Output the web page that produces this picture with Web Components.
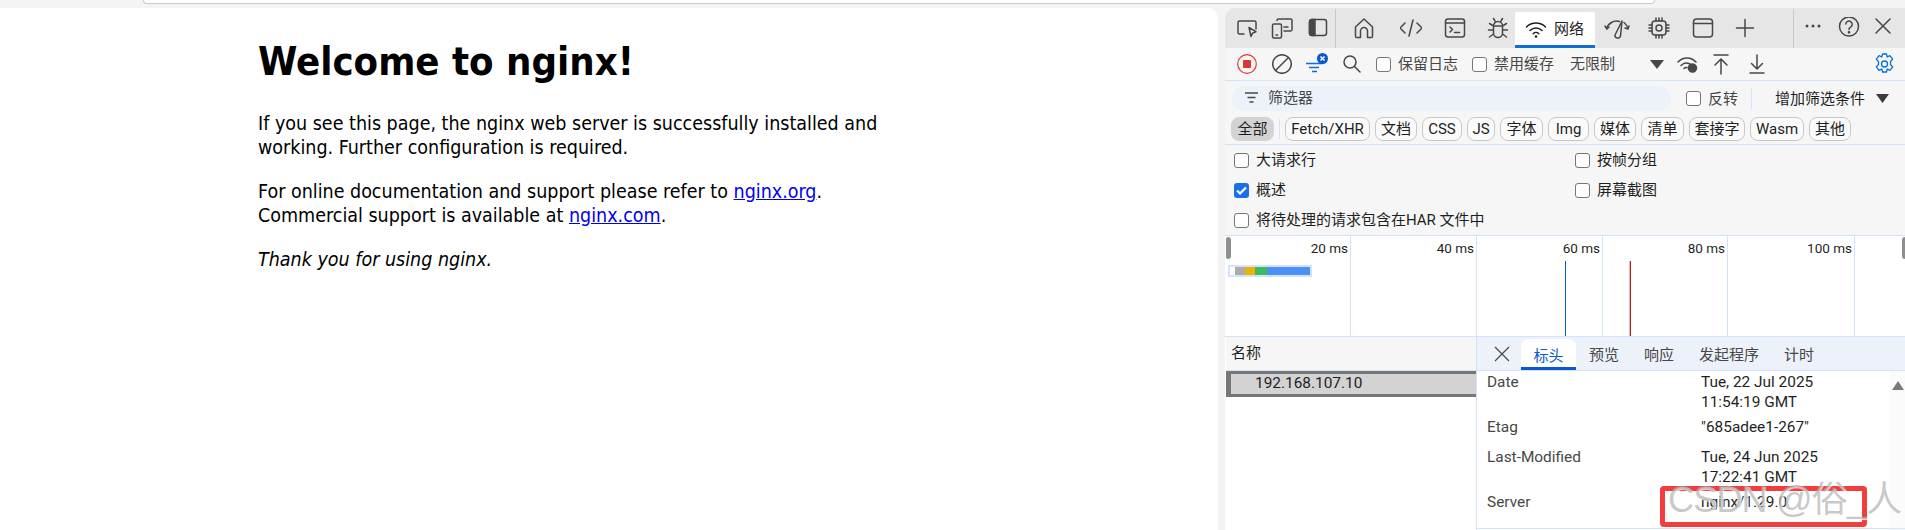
<!DOCTYPE html>
<html lang="zh">
<head>
<meta charset="utf-8">
<title>nginx devtools</title>
<style>
    html, body { margin: 0; height: 530px; overflow: hidden; background: #f3f3f3; }
</style>
</head>
<body>
<browser-frame></browser-frame>
<script>
// shared look of the devtools icons
const svgAttrs = 'fill="none" stroke="#474747" stroke-width="1.5" stroke-linecap="round" stroke-linejoin="round"';

customElements.define("browser-frame", class extends HTMLElement {
    connectedCallback() {
        this.attachShadow({mode: 'open'});
        this.shadowRoot.innerHTML = `
            <style>
                :host { display: block; width: 1905px; height: 530px; }
                #strip { height: 8px; background: #f4f4f4; }
                #address {
                    box-sizing: border-box;
                    width: 1512px;
                    height: 4px;
                    margin-left: 143px;
                    background: #fff;
                    border: 1px solid #cbcbcb;
                    border-top: none;
                    border-radius: 0 0 12px 12px;
                }
                #main { display: flex; gap: 7px; height: 522px; }
            </style>
            <div id="strip"><div id="address"></div></div>
            <div id="main">
                <nginx-page></nginx-page>
                <dev-tools></dev-tools>
            </div>
        `;
    }
});

customElements.define("nginx-page", class extends HTMLElement {
    connectedCallback() {
        this.attachShadow({mode: 'open'});
        this.shadowRoot.innerHTML = `
            <style>
                :host {
                    display: block;
                    box-sizing: border-box;
                    width: 1218px;
                    padding: 30px 0 0 258px;
                    background: #fff;
                    border-radius: 0 10px 0 0;
                    color: #000;
                    font-family: "DejaVu Sans Condensed", "DejaVu Sans", sans-serif;
                    font-size: 19.500px;
                    line-height: 24px;
                }
                h1 { margin: 0 0 27px; font-size: 39.700px; line-height: 47px; font-weight: bold; }
                p { margin: 0 0 20px; width: 640px; }
                a { color: #00e; }
            </style>
            <h1>Welcome to nginx!</h1>
            <p>If you see this page, the nginx web server is successfully installed and working. Further configuration is required.</p>
            <p>For online documentation and support please refer to <a href="#">nginx.org</a>.<br>Commercial support is available at <a href="#">nginx.com</a>.</p>
            <p><em>Thank you for using nginx.</em></p>
        `;
    }
});

customElements.define("dev-tools", class extends HTMLElement {
    connectedCallback() {
        this.attachShadow({mode: 'open'});
        this.shadowRoot.innerHTML = `
            <style>
                :host {
                    display: block;
                    width: 680px;
                    height: 522px;
                    overflow: hidden;
                    background: #f6f6f6;
                    border-radius: 10px 0 0 0;
                    color: #1f1f1f;
                    font-family: Roboto, "Noto Sans CJK SC", sans-serif;
                    font-size: 15px;
                    line-height: 20px;
                }
            </style>
            <dt-tabbar></dt-tabbar>
            <dt-toolbar></dt-toolbar>
            <dt-filter></dt-filter>
            <dt-chips></dt-chips>
            <dt-options></dt-options>
            <dt-overview></dt-overview>
            <dt-requests></dt-requests>
        `;
    }
});

customElements.define("dt-tabbar", class extends HTMLElement {
    connectedCallback() {
        this.attachShadow({mode: 'open'});
        this.shadowRoot.innerHTML = `
            <style>
                :host { display: flex; align-items: center; height: 40px; background: #e6e6e6; }
                svg { display: block; flex: none; width: 22px; height: 22px; }
                .sep { flex: none; width: 1px; height: 39px; background: #c8c8c8; }
                #net {
                    flex: none;
                    display: flex;
                    align-items: center;
                    box-sizing: border-box;
                    width: 80px;
                    height: 36px;
                    margin: 4px 0 0 6px;
                    padding-left: 10px;
                    gap: 7px;
                    background: #fff;
                    border-bottom: 3px solid #0b6fd6;
                    border-radius: 2px 2px 0 0;
                    font-size: 15px;
                    color: #1f1f1f;
                }
            </style>
            <svg style="margin-left:11px" viewBox="0 0 22 22" ${svgAttrs}><path d="M8 17H3.500A1.500 1.500 0 0 1 2 15.500v-10A1.500 1.500 0 0 1 3.500 4h15A1.500 1.500 0 0 1 20 5.500V12"/><path d="M13 10.500l2 9 1.600-3.400 3.400-1.400z"/></svg>
            <svg style="margin-left:13px" viewBox="0 0 22 22" ${svgAttrs}><rect x="1.500" y="7" width="9" height="14" rx="1.500"/><path d="M6 3.500A1.500 1.500 0 0 1 7.500 2h12A1.500 1.500 0 0 1 21 3.500v9a1.500 1.500 0 0 1-1.500 1.500H13M13 10h4M5 18h1.500"/></svg>
            <svg style="margin-left:14px" viewBox="0 0 22 22" ${svgAttrs}><rect x="2.500" y="2.500" width="17" height="16" rx="2.500"/><path d="M2.500 5a2.500 2.500 0 0 1 2.500-2.500h3v16H5A2.500 2.500 0 0 1 2.500 16z" fill="#474747"/></svg>
            <div class="sep" style="margin-left:6px"></div>
            <svg style="margin-left:17px" viewBox="0 0 22 22" ${svgAttrs}><path d="M2.500 10L11 2l8.500 8v9.500a1 1 0 0 1-1 1h-4V14a3.500 3.500 0 0 0-7 0v6.500h-4a1 1 0 0 1-1-1z"/></svg>
            <svg style="margin-left:25px" viewBox="0 0 22 22" ${svgAttrs}><path d="M5 6l-5 5 5 5M17 6l5 5-5 5M13 3L9 19"/></svg>
            <svg style="margin-left:22px" viewBox="0 0 22 22" ${svgAttrs}><rect x="1.500" y="2" width="19" height="18" rx="2.500"/><path d="M1.500 6h19M6 10l2.500 2.500L6 15M10.500 15.500h5"/></svg>
            <svg style="margin-left:21px" viewBox="0 0 22 22" ${svgAttrs}><path d="M6.500 9a4.500 4.500 0 0 1 9 0v7a4.500 4.500 0 0 1-9 0zM6.500 9h9M8 4L6.500 1.500M14 4l1.500-2.500M6.500 9L2.500 6.500M15.500 9l4-2.500M6.500 13H1.500M15.500 13h5M6.500 17l-4 3M15.500 17l4 3"/></svg>
            <div id="net">
                <svg viewBox="0 0 22 22" ${svgAttrs}><path d="M1.500 9a13.500 13.500 0 0 1 19 0M5 12.500a8.500 8.500 0 0 1 12 0M8.200 15.700a4 4 0 0 1 5.600 0" stroke="#1f1f1f"/><circle cx="11" cy="18.500" r="1.300" fill="#1f1f1f" stroke="none"/></svg>
                <span>网络</span>
            </div>
            <svg style="margin-left:9px;width:26px" viewBox="0 0 26 22" ${svgAttrs} stroke-width="1.300"><path d="M2.500 12a10.500 10.500 0 0 1 13-7.500M20 5.500a10.500 10.500 0 0 1 4 6.500M1 9l2 3 2-2M21 11l3 1 1-3"/><path d="M11 18l7-14-1.500 15a2.800 2.800 0 0 1-5.500-1z"/></svg>
            <svg style="margin-left:18px" viewBox="0 0 22 22" ${svgAttrs}><rect x="4" y="4" width="14" height="14" rx="3"/><circle cx="11" cy="11" r="3"/><path d="M8 4V1M11 4V1M14 4V1M8 21v-3M11 21v-3M14 21v-3M4 8H1M4 11H1M4 14H1M21 8h-3M21 11h-3M21 14h-3"/></svg>
            <svg style="margin-left:22px" viewBox="0 0 22 22" ${svgAttrs}><rect x="1.500" y="2" width="19" height="18" rx="3"/><path d="M1.500 6.500h19"/></svg>
            <svg style="margin-left:21px;width:20px" viewBox="0 0 20 22" ${svgAttrs}><path d="M10 2.500v17M1.500 11h17"/></svg>
            <div class="sep" style="margin-left:38px"></div>
            <svg style="margin-left:11px;width:16px" viewBox="0 0 16 22" fill="#474747"><circle cx="2" cy="9" r="1.500"/><circle cx="8" cy="9" r="1.500"/><circle cx="14" cy="9" r="1.500"/></svg>
            <svg style="margin-left:17px" viewBox="0 0 22 22" ${svgAttrs} stroke-width="1.200"><circle cx="11" cy="9.500" r="9.500"/><path d="M7.800 7a3.200 3.200 0 1 1 4.700 3.100c-1 .6-1.500 1.200-1.500 2.400"/><circle cx="11" cy="15.300" r=".6"/></svg>
            <svg style="margin-left:14px;width:18px" viewBox="0 0 18 22" ${svgAttrs}><path d="M2 2l14 14M16 2L2 16"/></svg>
        `;
    }
});

// checkbox with label, used in the toolbar and the options block
customElements.define("dt-check", class extends HTMLElement {
    connectedCallback() {
        const on = this.hasAttribute("checked");
        this.attachShadow({mode: 'open'});
        this.shadowRoot.innerHTML = `
            <style>
                :host { display: inline-flex; align-items: center; gap: 7px; font-size: 15px; }
                :host([dim]) { color: #474747; }
                #box {
                    flex: none;
                    box-sizing: border-box;
                    width: 15px;
                    height: 15px;
                    border: 1px solid #747775;
                    border-radius: 3px;
                    background: #fff;
                }
                #box.on { border: none; background: #1a6fe8; }
                svg { display: block; }
            </style>
            <div id="box" class="${on ? 'on' : ''}">${on ? '<svg width="15" height="15" viewBox="0 0 15 15" fill="none" stroke="#fff" stroke-width="2.200"><path d="M3 7.500l3 3 6-6"/></svg>' : ''}</div>
            <span><slot></slot></span>
        `;
    }
});

customElements.define("dt-toolbar", class extends HTMLElement {
    connectedCallback() {
        this.attachShadow({mode: 'open'});
        this.shadowRoot.innerHTML = `
            <style>
                :host {
                    display: flex;
                    align-items: center;
                    box-sizing: border-box;
                    height: 33px;
                    border-bottom: 1px solid #d3e3fd;
                    color: #474747;
                }
                svg { display: block; flex: none; }
                span { flex: none; font-size: 15px; }
            </style>
            <svg style="margin-left:12px" width="20" height="20" viewBox="0 0 20 20"><circle cx="10" cy="10" r="9.300" fill="none" stroke="#dc362e" stroke-width="1.200"/><rect x="6" y="6" width="8" height="8" rx="1" fill="#dc362e"/></svg>
            <svg style="margin-left:15px" width="20" height="20" viewBox="0 0 20 20" ${svgAttrs} stroke-width="1.200"><circle cx="10" cy="10" r="9.300"/><path d="M3.500 16.500l13-13"/></svg>
            <svg style="margin-left:14px" width="23" height="22" viewBox="0 0 23 22" fill="none" stroke="#0b6fd6" stroke-width="1.300"><path d="M0 10.500h17M3 14.500h10M6 18.500h5"/><circle cx="16.500" cy="5.500" r="5.500" fill="#0b57d0" stroke="none"/><path d="M14.500 3.500l4 4M18.500 3.500l-4 4" stroke="#fff" stroke-width="1.500"/></svg>
            <svg style="margin-left:14px" width="18" height="18" viewBox="0 0 18 18" ${svgAttrs} stroke-width="1.300"><circle cx="7" cy="7" r="6"/><path d="M11.500 11.500L17 17"/></svg>
            <dt-check style="margin-left:15px">保留日志</dt-check>
            <dt-check style="margin-left:14px">禁用缓存</dt-check>
            <span style="margin-left:16px">无限制</span>
            <svg style="margin-left:35px" width="14" height="9" viewBox="0 0 14 9"><path d="M0 0h14L7 9z" fill="#474747"/></svg>
            <svg style="margin-left:13px" width="21" height="18" viewBox="0 0 21 18" ${svgAttrs} stroke-width="1.300"><path d="M1 7a12 12 0 0 1 18 0M4 10.500a7.500 7.500 0 0 1 9-1.500M7 13.500a3 3 0 0 1 3-1"/><circle cx="15.500" cy="13" r="3.500" stroke-width="2.500" stroke-dasharray="2 1"/><circle cx="15.500" cy="13" r="2" fill="#474747"/></svg>
            <svg style="margin-left:14px" width="18" height="21" viewBox="0 0 18 21" ${svgAttrs} stroke-width="1.300"><path d="M2 1h14M9 20V5M3 11l6-6 6 6"/></svg>
            <svg style="margin-left:19px" width="16" height="21" viewBox="0 0 16 21" ${svgAttrs} stroke-width="1.300"><path d="M1 19h14M8 1v14M2.500 9.500L8 15l5.500-5.500"/></svg>
            <svg style="margin-left:109px" width="21" height="22" viewBox="0 0 21 22" fill="none" stroke="#0b6fd6" stroke-width="1.300" stroke-linejoin="round"><path d="M8.500 1h4l.7 3 2.700-1.400 2.800 3.500-2.200 2.400v3l2.200 2.400-2.800 3.500-2.700-1.400-.7 3h-4l-.7-3-2.700 1.400-2.800-3.500 2.200-2.400v-3L2.300 6.100l2.800-3.500 2.700 1.400z"/><circle cx="10.500" cy="11" r="3"/></svg>
        `;
    }
});

customElements.define("dt-filter", class extends HTMLElement {
    connectedCallback() {
        this.attachShadow({mode: 'open'});
        this.shadowRoot.innerHTML = `
            <style>
                :host { display: flex; align-items: center; height: 35px; }
                #input {
                    flex: none;
                    display: flex;
                    align-items: center;
                    gap: 10px;
                    box-sizing: border-box;
                    width: 439px;
                    height: 25px;
                    margin-left: 7px;
                    padding: 0 0 2px 13px;
                    background: #edf2fa;
                    border-radius: 12.500px;
                    color: #474747;
                    font-size: 15px;
                }
                svg { display: block; flex: none; }
                .sep { flex: none; width: 1px; height: 21px; margin: 0 23px 0 13px; background: #d3e3fd; }
                #more { flex: none; font-size: 15px; }
            </style>
            <div id="input">
                <svg width="13" height="11" viewBox="0 0 13 11" fill="none" stroke="#474747" stroke-width="1.300"><path d="M0 1h13M2.500 5.500h8M4.500 10h4"/></svg>
                <span>筛选器</span>
            </div>
            <dt-check dim style="margin-left:15px">反转</dt-check>
            <div class="sep"></div>
            <span id="more">增加筛选条件</span>
            <svg style="margin-left:11px" width="13" height="9" viewBox="0 0 13 9"><path d="M0 0h13L6.500 9z" fill="#3c3c3c"/></svg>
        `;
    }
});

customElements.define("dt-chip", class extends HTMLElement {
    connectedCallback() {
        this.attachShadow({mode: 'open'});
        this.shadowRoot.innerHTML = `
            <style>
                :host {
                    display: flex;
                    align-items: center;
                    justify-content: center;
                    box-sizing: border-box;
                    height: 24px;
                    border: 1px solid #c7c7c7;
                    border-radius: 8px;
                    background: #fafafa;
                    font-size: 15px;
                }
                :host([active]) { background: #d3d3d3; border-color: #d3d3d3; }
            </style>
            <slot></slot>
        `;
    }
});

customElements.define("dt-chips", class extends HTMLElement {
    connectedCallback() {
        this.attachShadow({mode: 'open'});
        this.shadowRoot.innerHTML = `
            <style>
                :host {
                    display: flex;
                    align-items: center;
                    gap: 5px;
                    box-sizing: border-box;
                    height: 29px;
                    padding: 0 0 2px 6px;
                    border-bottom: 1px solid #d3e3fd;
                }
                .sep { width: 1px; height: 20px; background: #d3e3fd; }
            </style>
            <dt-chip active style="width:43px">全部</dt-chip>
            <div class="sep"></div>
            <dt-chip style="width:85px">Fetch/XHR</dt-chip>
            <dt-chip style="width:42px">文档</dt-chip>
            <dt-chip style="width:40px">CSS</dt-chip>
            <dt-chip style="width:28px">JS</dt-chip>
            <dt-chip style="width:43px">字体</dt-chip>
            <dt-chip style="width:41px">Img</dt-chip>
            <dt-chip style="width:42px">媒体</dt-chip>
            <dt-chip style="width:43px">清单</dt-chip>
            <dt-chip style="width:56px">套接字</dt-chip>
            <dt-chip style="width:54px">Wasm</dt-chip>
            <dt-chip style="width:42px">其他</dt-chip>
        `;
    }
});

customElements.define("dt-options", class extends HTMLElement {
    connectedCallback() {
        this.attachShadow({mode: 'open'});
        this.shadowRoot.innerHTML = `
            <style>
                :host {
                    display: grid;
                    grid-template-columns: 341px 1fr;
                    grid-auto-rows: 30px;
                    align-items: center;
                    box-sizing: border-box;
                    height: 91px;
                    padding-left: 9px;
                    border-bottom: 1px solid #d3e3fd;
                }
                .wide { grid-column: 1 / 3; }
            </style>
            <dt-check>大请求行</dt-check>
            <dt-check>按帧分组</dt-check>
            <dt-check checked>概述</dt-check>
            <dt-check>屏幕截图</dt-check>
            <dt-check class="wide">将待处理的请求包含在HAR 文件中</dt-check>
        `;
    }
});

customElements.define("dt-overview", class extends HTMLElement {
    connectedCallback() {
        this.attachShadow({mode: 'open'});
        this.shadowRoot.innerHTML = `
            <style>
                :host {
                    display: flex;
                    position: relative;
                    box-sizing: border-box;
                    height: 101px;
                    background: #fff;
                    border-bottom: 1px solid #d3e3fd;
                    font-size: 13.500px;
                }
                .cell {
                    flex: none;
                    box-sizing: border-box;
                    padding: 2px 2px 0 0;
                    border-right: 1px solid #d3e3fd;
                    text-align: right;
                }
                .cell:first-child { border-left: 2px solid #a8c7fa; }
                .cell:last-of-type { border-right-width: 2px; }
                .mark { position: absolute; top: 25px; bottom: 0; width: 1px; }
                .handle { position: absolute; top: 1px; height: 22px; background: #8f8f8f; }
                #lane { position: absolute; left: 3px; top: 29px; display: flex; box-sizing: border-box; height: 12px; padding: 2px; background: #d3e3fd; }
                #lane i { display: block; height: 8px; }
            </style>
            <div class="cell" style="width:126px">20 ms</div>
            <div class="cell" style="width:126px">40 ms</div>
            <div class="cell" style="width:126px">60 ms</div>
            <div class="cell" style="width:125px">80 ms</div>
            <div class="cell" style="width:127px">100 ms</div>
            <div class="handle" style="left:1px;width:5px;border-radius:2px 3px 3px 2px"></div>
            <div class="handle" style="right:0;width:3px;border-radius:3px 0 0 3px"></div>
            <div id="lane">
                <i style="width:5px;background:#fff"></i>
                <i style="width:10px;background:#acacac"></i>
                <i style="width:10px;background:#eab308"></i>
                <i style="width:12px;background:#3dbb61"></i>
                <i style="width:43px;background:#4d90f5"></i>
            </div>
            <div class="mark" style="left:340px;background:#0b57d0"></div>
            <div class="mark" style="left:404px;background:#e8b4b0"></div>
            <div class="mark" style="left:405px;background:#b3261e"></div>
        `;
    }
});

customElements.define("dt-requests", class extends HTMLElement {
    connectedCallback() {
        this.attachShadow({mode: 'open'});
        this.shadowRoot.innerHTML = `
            <style>
                :host { display: flex; height: 193px; background: #fff; }
                #list { flex: none; width: 250px; margin-left: 1px; }
                #name {
                    box-sizing: border-box;
                    height: 34px;
                    padding: 6px 0 0 5px;
                    background: #f6f6f6;
                    border-bottom: 1px solid #d3e3fd;
                    font-size: 15px;
                }
                #row {
                    box-sizing: border-box;
                    height: 26px;
                    padding-left: 24px;
                    background: #d3d3d3;
                    border: 3px solid #767676;
                    border-left-width: 5px;
                    border-right: none;
                    font-size: 15.400px;
                    line-height: 18px;
                }
            </style>
            <div id="list">
                <div id="name">名称</div>
                <div id="row">192.168.107.10</div>
            </div>
            <dt-detail></dt-detail>
        `;
    }
});

customElements.define("dt-detail", class extends HTMLElement {
    connectedCallback() {
        this.attachShadow({mode: 'open'});
        this.shadowRoot.innerHTML = `
            <style>
                :host {
                    display: block;
                    position: relative;
                    flex: 1;
                    border-left: 1px solid #d3e3fd;
                    color: #1f1f1f;
                }
                #tabs {
                    display: flex;
                    align-items: flex-end;
                    box-sizing: border-box;
                    height: 34px;
                    background: #edf2fa;
                    border-bottom: 1px solid #d3e3fd;
                    color: #474747;
                    font-size: 15px;
                }
                #tabs svg { align-self: center; flex: none; margin: 0 11px 0 17px; }
                #tabs span { flex: none; height: 28px; line-height: 26px; margin-right: 25px; }
                #tabs #on {
                    box-sizing: border-box;
                    width: 55px;
                    height: 31px;
                    margin: 0 13px 0 0;
                    padding-top: 4px;
                    text-align: center;
                    background: #fff;
                    border-bottom: 3px solid #0b57d0;
                    border-radius: 8px 8px 0 0;
                    color: #0b57d0;
                }
                #body {
                    display: grid;
                    grid-template-columns: 214px 1fr;
                    row-gap: 5px;
                    padding: 1px 30px 0 10px;
                    font-size: 15.400px;
                }
                .k { color: #474747; }
                .gap { margin-bottom: 5px; }
                #scrollbar { position: absolute; right: 0; top: 34px; bottom: 0; width: 15px; background: #fbfbfb; }
                #scrollbar i {
                    display: block;
                    width: 0;
                    height: 0;
                    margin: 10px auto 0;
                    border: 6px solid transparent;
                    border-top: none;
                    border-bottom: 9px solid #7a7a7a;
                }
                #red {
                    position: absolute;
                    left: 183px;
                    top: 149px;
                    box-sizing: border-box;
                    width: 207px;
                    height: 41px;
                    border: 5px solid #f43c3c;
                    border-radius: 4px;
                }
                #mark {
                    position: absolute;
                    left: 191px;
                    top: 139px;
                    color: rgba(165, 165, 165, .6);
                    font: 36px/48px "Liberation Sans", "Noto Sans CJK SC", sans-serif;
                    letter-spacing: -.8px;
                    white-space: nowrap;
                    text-shadow: 1px 1px 1px rgba(255, 255, 255, .8);
                }
                #line { position: absolute; left: 0; right: 0; bottom: 1px; height: 1px; background: #d3e3fd; }
            </style>
            <div id="tabs">
                <svg width="16" height="16" viewBox="0 0 16 16" fill="none" stroke="#474747" stroke-width="1.200"><path d="M1 1l14 14M15 1L1 15"/></svg>
                <span id="on">标头</span>
                <span>预览</span>
                <span>响应</span>
                <span>发起程序</span>
                <span>计时</span>
            </div>
            <div id="body">
                <div class="k">Date</div><div>Tue, 22 Jul 2025<br>11:54:19 GMT</div>
                <div class="k gap">Etag</div><div class="gap">"685adee1-267"</div>
                <div class="k">Last-Modified</div><div>Tue, 24 Jun 2025<br>17:22:41 GMT</div>
                <div class="k">Server</div><div>nginx/1.29.0</div>
            </div>
            <div id="scrollbar"><i></i></div>
            <div id="line"></div>
            <div id="red"></div>
            <div id="mark">CSDN @俗_人</div>
        `;
    }
});
</script>
</body>
</html>
